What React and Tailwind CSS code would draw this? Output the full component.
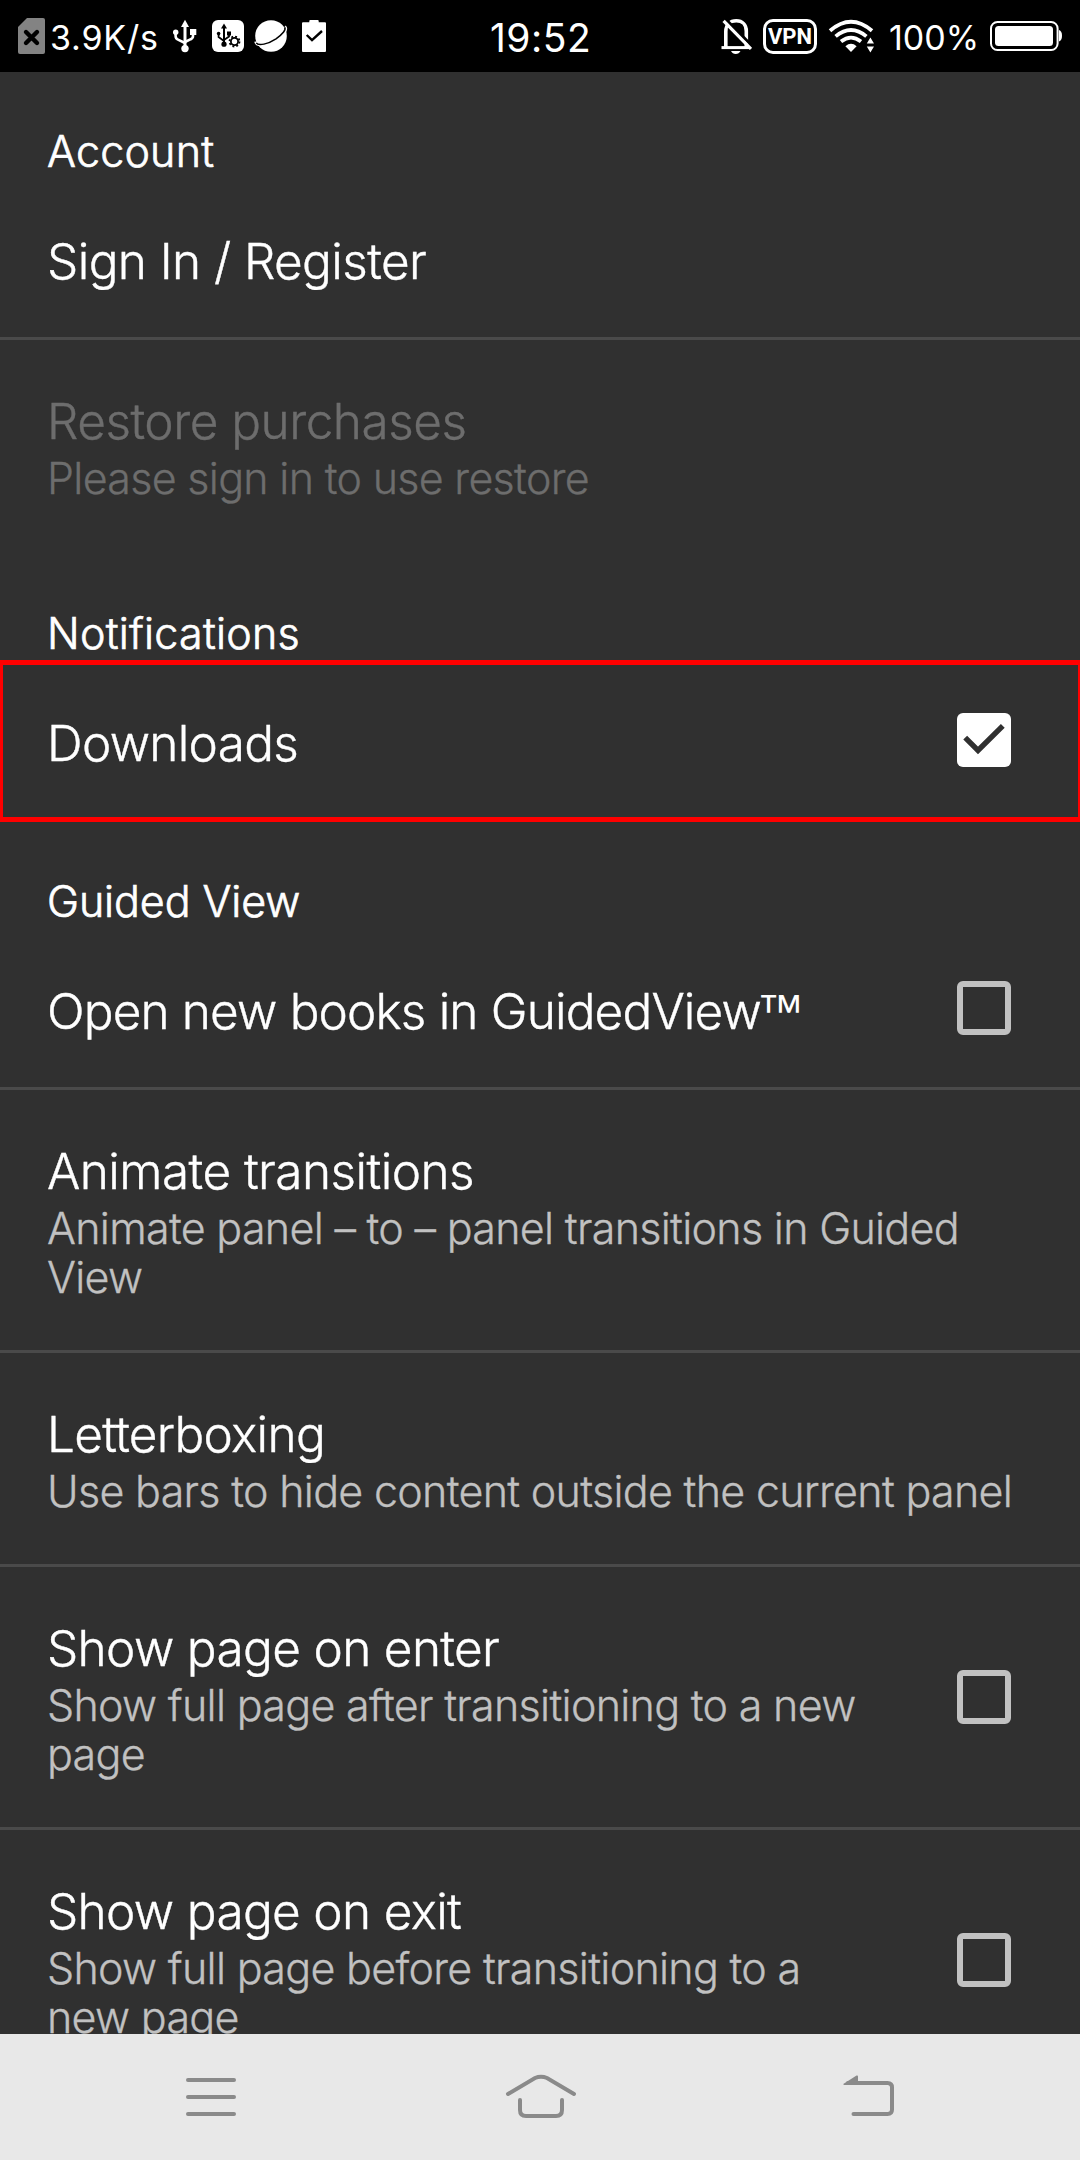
const ROWS = [
  { header: 'Account', headerClass: 'pt-[55px] tracking-[0.2px]' },
  { title: 'Sign In / Register', titleClass: 'tracking-[-0.6px]', divider: true },
  {
    title: 'Restore purchases',
    titleClass: 'tracking-[-0.5px]',
    summary: 'Please sign in to use restore',
    disabled: true,
  },
  { header: 'Notifications', headerClass: 'pt-[58px] tracking-[0.25px]' },
  { title: 'Downloads', titleClass: 'tracking-[-0.7px]', checkbox: true, checked: true, highlighted: true },
  { header: 'Guided View', headerClass: 'pt-[58px] tracking-[-0.1px]' },
  { title: 'Open new books in GuidedView', trademark: true, titleClass: 'tracking-[-0.85px]', checkbox: true, divider: true },
  {
    title: 'Animate transitions',
    titleClass: 'tracking-[-0.56px]',
    summary: 'Animate panel – to – panel transitions in Guided View',
    divider: true,
  },
  {
    title: 'Letterboxing',
    titleClass: 'tracking-[-0.7px]',
    summary: 'Use bars to hide content outside the current panel',
    divider: true,
  },
  {
    title: 'Show page on enter',
    titleClass: 'tracking-[-0.66px]',
    summary: 'Show full page after transitioning to a new page',
    checkbox: true,
    divider: true,
  },
  {
    title: 'Show page on exit',
    titleClass: 'tracking-[-0.67px]',
    summary: 'Show full page before transitioning to a new page',
    checkbox: true,
  },
];

function SimIcon() {
  return (
    <svg className="shrink-0" width="27" height="36" viewBox="18 18 27 36">
      <path d="M27 18H43a2 2 0 0 1 2 2V52a2 2 0 0 1-2 2H20a2 2 0 0 1-2-2V27Z" fill="#838383" />
      <path d="M26 32L37 43M37 32L26 43" stroke="#000" strokeWidth="4.4" strokeLinecap="round" />
    </svg>
  );
}

function UsbIcon() {
  return (
    <svg className="ml-[14px] shrink-0" width="26" height="36" viewBox="172 18 26 36" fill="none" stroke="#fff">
      <path d="M185 25V48" strokeWidth="3" />
      <path d="M175.6 33V36Q175.6 38.6 178 39.6L185 43M193 33V36Q193 38.2 190.8 39.2L185 42" strokeWidth="2.6" />
      <path d="M185 19.8L189 27H181Z" fill="#fff" stroke="none" />
      <circle cx="185" cy="48.6" r="3.7" fill="#fff" stroke="none" />
      <circle cx="175.7" cy="32.2" r="2.7" fill="#fff" stroke="none" />
      <rect x="190" y="29" width="6.3" height="6" fill="#fff" stroke="none" />
    </svg>
  );
}

function UsbSettingsIcon() {
  return (
    <svg className="ml-[14px] shrink-0" width="32" height="36" viewBox="212 18 32 36" fill="none" stroke="#000">
      <rect x="212" y="20" width="32" height="32" rx="6" fill="#fff" stroke="none" />
      <path d="M224 27V44" strokeWidth="2" />
      <path d="M218.6 34V37L224 41M229 34V36.5L224 40" strokeWidth="1.8" />
      <path d="M224 23.5L227 28.5H221Z" fill="#000" stroke="none" />
      <circle cx="224" cy="44.2" r="2.6" fill="#000" stroke="none" />
      <circle cx="218.6" cy="33.6" r="1.8" fill="#000" stroke="none" />
      <rect x="227" y="31.5" width="4" height="4" fill="#000" stroke="none" />
      <circle cx="234.5" cy="41.5" r="3.6" strokeWidth="1.8" />
      <circle cx="234.5" cy="41.5" r="5" strokeWidth="1.8" strokeDasharray="1.9 2.03" />
    </svg>
  );
}

function PlanetIcon() {
  return (
    <svg className="ml-[10px] shrink-0" width="34" height="36" viewBox="254 18 34 36" fill="none">
      <circle cx="271" cy="36" r="15.8" fill="#fff" />
      <path d="M256 41.5C257 46.5 267 45 276 39.5C283.500 34.500 287 29 284.5 27" stroke="#fff" strokeWidth="3.6" />
      <path d="M256.2 42.8C258.5 46.5 268 44 276 38.8C283 34 286.4 29.5 284.6 27.2" stroke="#000" strokeWidth="1.5" />
    </svg>
  );
}

function ClipboardIcon() {
  return (
    <svg className="ml-[13px] shrink-0" width="26" height="36" viewBox="301 18 26 36" fill="none">
      <path d="M303 22.3H309.3V21Q309.3 20 310.3 20H317.7Q318.7 20 318.7 21V22.3H325Q326 22.3 326 23.3V51Q326 52 325 52H303Q302 52 302 51V23.3Q302 22.3 303 22.3Z" fill="#fff" />
      <path d="M306.7 35L312 40.2L322 31" stroke="#000" strokeWidth="2.4" />
    </svg>
  );
}

function BellOffIcon() {
  return (
    <svg className="ml-[119px] shrink-0" width="32" height="36" viewBox="720 18 32 36" fill="none" stroke="#fff">
      <path d="M725.8 49V31.5C725.8 25 730 20.8 736.3 20.8C742.5 20.8 746.3 25 746.3 31V49" strokeWidth="3.6" />
      <path d="M721.5 47.6H749" strokeWidth="3" />
      <path d="M725 18.5L752.5 46.5" stroke="#000" strokeWidth="3" />
      <path d="M723.6 20.8L751 49" strokeWidth="3.2" />
      <path d="M731 51H740.5Q739 54 735.7 54Q732.5 54 731 51Z" fill="#fff" stroke="none" />
    </svg>
  );
}

function WifiIcon() {
  return (
    <svg className="ml-[10px] shrink-0" width="47" height="36" viewBox="828 18 47 36" fill="none" stroke="#fff">
      <path d="M830 30.8Q851 12.8 872 30.8" strokeWidth="3.8" />
      <path d="M835.6 36.4Q851 23.6 866.4 36.4" strokeWidth="3.8" />
      <path d="M841 41.6Q851 33.6 861 41.6" strokeWidth="3.8" />
      <path d="M851 52L845.4 46.2Q851 41.4 856.6 46.2Z" fill="#fff" stroke="none" />
      <path d="M870.4 37.6L874 43.6H866.8ZM870.4 52.4L874 46.4H866.8Z" fill="#fff" stroke="none" />
    </svg>
  );
}

function BatteryIcon() {
  return (
    <svg className="ml-[9px] shrink-0" width="74" height="36" viewBox="989 18 74 36" fill="none">
      <rect x="991" y="22" width="66.6" height="28" rx="6.5" stroke="#fff" strokeWidth="2" />
      <rect x="995" y="26" width="58" height="20" rx="3.5" fill="#fff" />
      <path d="M1059 30Q1062 31 1062 35.7Q1062 40.5 1059 41.5Z" fill="#fff" />
    </svg>
  );
}

function StatusBar() {
  return (
    <div className="flex h-[72px] shrink-0 items-center bg-black pl-[18px] text-white">
      <SimIcon />
      <span className="mt-[3px] ml-[5px] w-[108px] shrink-0 text-[34px] leading-[34px] tracking-[0.8px] whitespace-nowrap">3.9K/s</span>
      <UsbIcon />
      <UsbSettingsIcon />
      <PlanetIcon />
      <ClipboardIcon />
      <span className="mt-[3px] ml-[163px] w-[111px] shrink-0 text-[39px] leading-[39px] tracking-[0.5px] whitespace-nowrap">19:52</span>
      <BellOffIcon />
      <span className="ml-[11px] flex h-[35px] w-[54px] shrink-0 items-center justify-center rounded-[10px] border-[3px] border-white pt-[2px] font-['Roboto'] text-[22px] leading-[22px] font-bold">VPN</span>
      <span className="w-px shrink-0" />
      <WifiIcon />
      <span className="mt-[3px] ml-[14px] w-[91px] shrink-0 text-[34px] leading-[34px] whitespace-nowrap">100%</span>
      <BatteryIcon />
    </div>
  );
}

function Checkbox({ checked, nudge }) {
  if (checked) {
    return (
      <span className="mr-[69px] mb-px size-[54px] shrink-0 rounded-[6px] bg-white">
        <svg width="54" height="54" viewBox="0 0 54 54" fill="none">
          <path d="M8.2 24.6L21 37.4L45.8 12.8" stroke="#303030" strokeWidth="5.4" />
        </svg>
      </span>
    );
  }
  return <span className={`mr-[69px] size-[54px] shrink-0 rounded-[6px] border-[6px] border-[#c1c1c1] ${nudge ? 'mb-px' : ''}`} />;
}

function Preference({ row }) {
  return (
    <div className={`relative flex shrink-0 items-center justify-between pl-[47px] ${row.divider ? 'border-b-[3px] border-[#4a4a4a]' : ''}`}>
      <div className={`pt-[52px] ${row.summary ? 'pb-[48px]' : 'pb-[47px]'} ${row.checkbox ? 'w-[825px]' : 'w-[985px]'} ${row.disabled ? 'text-[#6d6d6d]' : 'text-white'}`}>
        <div className={`text-[49.5px] leading-[58px] font-light whitespace-nowrap [-webkit-text-stroke:0.4px] ${row.titleClass}`}>
          {row.title}
          {row.trademark && <span className="-ml-[4px] align-[2px] font-['Liberation_Sans'] text-[47px] leading-none [-webkit-text-stroke:0]">™</span>}
        </div>
        {row.summary && (
          <div className={`mt-[4px] text-[43px] leading-[49px] font-light tracking-[-0.7px] [-webkit-text-stroke:0.3px] ${row.disabled ? '' : 'text-[#c1c1c1]'}`}>{row.summary}</div>
        )}
      </div>
      {row.checkbox && <Checkbox checked={row.checked} nudge={!row.summary} />}
      {row.highlighted && <div className="absolute -top-[2px] right-0 -bottom-[3px] left-0 border-y-[5px] border-r-2 border-l-[3px] border-[#ff0000]" />}
    </div>
  );
}

function NavigationBar() {
  return (
    <div className="flex h-[126px] shrink-0 items-center justify-between bg-[#e8e8e8] pr-[184px] pl-[184px]">
      <svg width="54" height="46" viewBox="184 2074 54 46" fill="none" stroke="#8a8a8a" strokeWidth="4" strokeLinecap="round">
        <path d="M188 2080H234M188 2097H234M188 2114H234" />
      </svg>
      <svg width="74" height="46" viewBox="503 2074 74 46" fill="none" stroke="#8a8a8a" strokeWidth="4" strokeLinecap="round">
        <path d="M508 2094L535 2078Q541 2075.5 547 2078L574 2094" />
        <path d="M520 2100V2110Q520 2116 526 2116H556Q562 2116 562 2110V2100" />
      </svg>
      <svg width="54" height="46" viewBox="842 2074 54 46" fill="none" stroke="#8a8a8a" strokeWidth="4" strokeLinecap="round">
        <path d="M848 2083H887.5Q892 2083 892 2087.5V2109.5Q892 2114 887.5 2114H853.5" />
        <path d="M844 2083.5L856.5 2075.5Q858 2075 858 2076.5V2085H844Q842.6 2084.5 844 2083.5Z" fill="#8a8a8a" stroke="none" />
      </svg>
    </div>
  );
}

export default function App() {
  return (
    <div className="flex h-[2160px] w-[1080px] flex-col overflow-hidden bg-[#303030] font-['Inter','Liberation_Sans',sans-serif]">
      <StatusBar />
      <main className="flex min-h-0 flex-1 flex-col overflow-hidden">
        {ROWS.map((row) =>
          row.header ? (
            <h2 key={row.header} className={`shrink-0 pb-[4px] pl-[47px] text-[43px] leading-[49px] font-light text-white [-webkit-text-stroke:0.7px] ${row.headerClass}`}>
              {row.header}
            </h2>
          ) : (
            <Preference key={row.title} row={row} />
          ),
        )}
      </main>
      <NavigationBar />
    </div>
  );
}
